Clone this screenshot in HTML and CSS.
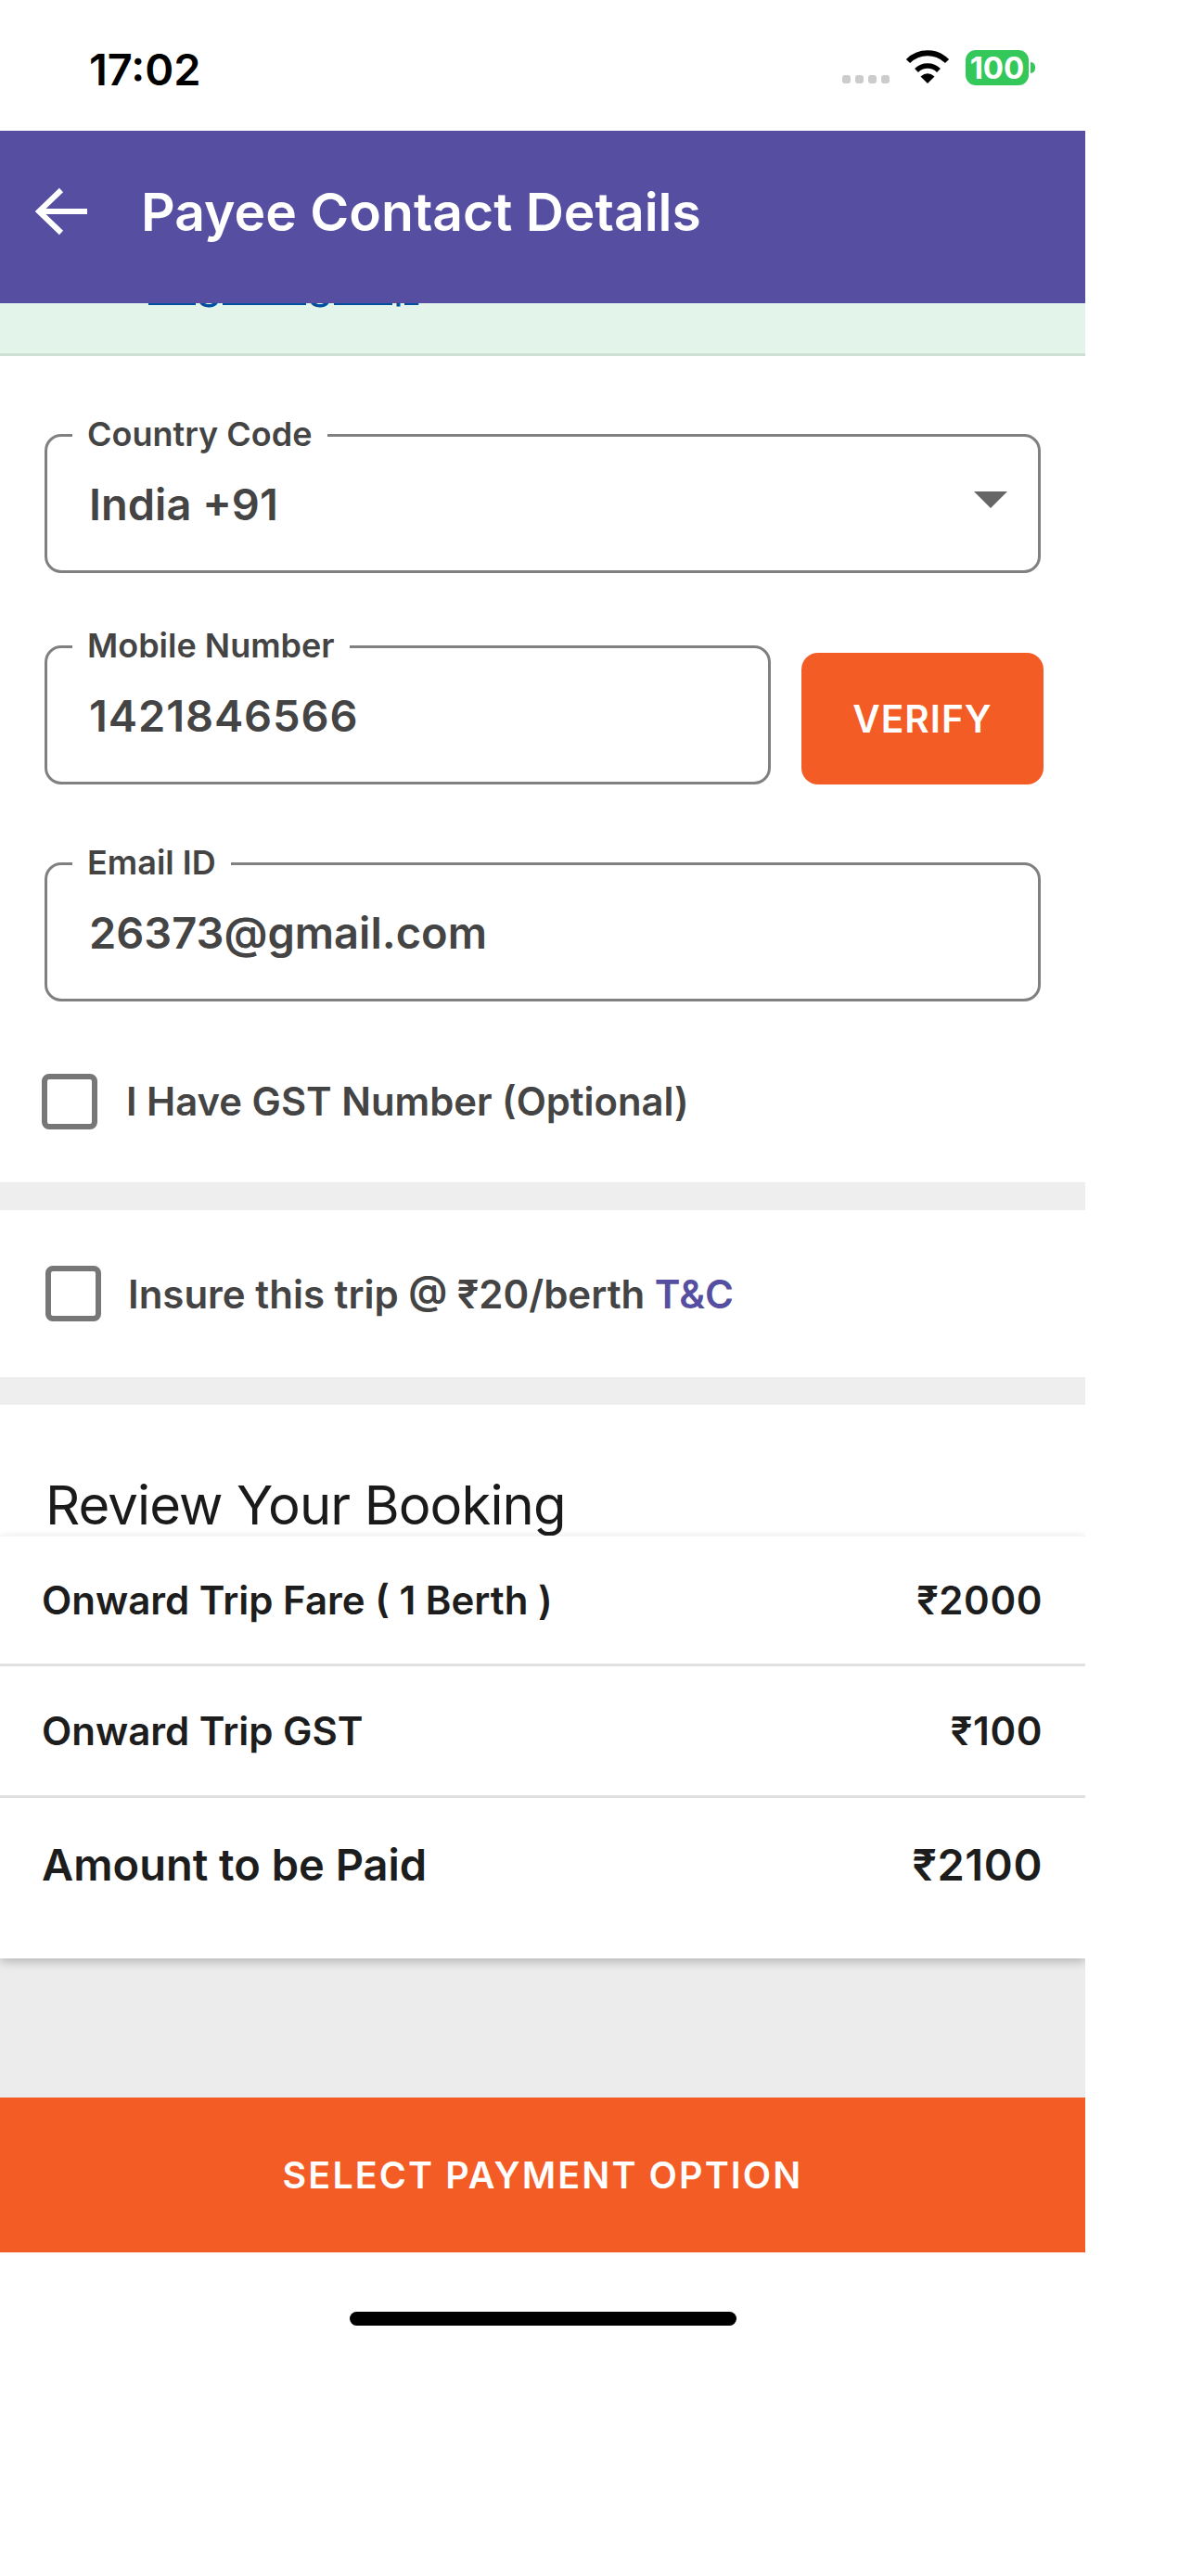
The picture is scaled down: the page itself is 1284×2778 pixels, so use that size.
FILE: index.html
```html
<!DOCTYPE html>
<html lang='en'>
<head>
    <meta charset='UTF-8'>
    <meta name='viewport' content='width=device-width, initial-scale=1.0'>
    <title>Payee Contact Details</title>
    <link rel="stylesheet" href="styles.css">
</head>
<body>
    <div class='app'>
        <div class='status-bar'>
            <span class='time'>17:02</span>
            <div class='status-icons'>
                <div class='signal'><i></i><i></i><i></i><i></i></div>
                <svg class='wifi' width='48' height='36' viewBox='0 0 48 36'>
                    <path d='M3 12A29.7 29.7 0 0 1 45 12' fill='none' stroke='#000' stroke-width='6'/>
                    <path d='M12 22A17 17 0 0 1 36 22' fill='none' stroke='#000' stroke-width='5.5'/>
                    <path d='M24 36L16.5 28.5Q24 22 31.5 28.5Z' fill='#000'/>
                </svg>
                <div class='battery'><span class='battery-level'>100</span><span class='battery-cap'></span></div>
            </div>
        </div>

        <header class='top-bar'>
            <svg class='back' width='56' height='52' viewBox='0 0 56 52'>
                <path d='M56 26H4M28 3L4 26L28 49' fill='none' stroke='#fff' stroke-width='6'/>
            </svg>
            <h1 class='title'>Payee Contact Details</h1>
        </header>

        <div class='banner'>
            <a class='banner-link'>Login/Sign up</a>
        </div>

        <section class='contact-form'>
            <fieldset class='field'>
                <legend>Country Code</legend>
                <span class='value'>India +91</span>
                <svg class='caret' width='36' height='18' viewBox='0 0 36 18'><path d='M0 0H36L18 18Z' fill='#666'/></svg>
            </fieldset>

            <div class='mobile-row'>
                <fieldset class='field field-mobile'>
                    <legend>Mobile Number</legend>
                    <span class='value'>1421846566</span>
                </fieldset>
                <button class='verify-btn'>VERIFY</button>
            </div>

            <fieldset class='field field-email'>
                <legend>Email ID</legend>
                <span class='value'>26373@gmail.com</span>
            </fieldset>

            <label class='check-row gst-row'>
                <span class='check-box'></span>
                <span>I Have GST Number (Optional)</span>
            </label>
        </section>

        <div class='band'></div>

        <label class='check-row insure-row'>
            <span class='check-box'></span>
            <span>Insure this trip @ ₹20/berth <a class='terms'>T&amp;C</a></span>
        </label>

        <div class='band'></div>

        <h2 class='review-title'>Review Your Booking</h2>

        <div class='fare-card'>
            <div class='fare-row'><span>Onward Trip Fare ( 1 Berth )</span><span class='amount'>₹2000</span></div>
            <div class='fare-row fare-row-gst'><span>Onward Trip GST</span><span class='amount'>₹100</span></div>
            <div class='fare-row fare-total'><span>Amount to be Paid</span><span class='amount'>₹2100</span></div>
        </div>

        <div class='filler'></div>

        <button class='pay-btn'>SELECT PAYMENT OPTION</button>

        <div class='home-area'><div class='home-bar'></div></div>
    </div>
</body>
</html>
```

FILE: styles.css
```css
* {
  box-sizing: border-box;
}

html,
body {
  margin: 0;
  background: #fff;
}

body {
  font-family: Inter, 'Noto Sans', sans-serif;
  color: #444;
}

.app {
  width: 1170px;
  height: 2778px;
  overflow: hidden;
}

/* status bar */
.status-bar {
  height: 141px;
  padding: 7px 54px 0 96px;
  display: flex;
  align-items: center;
  justify-content: space-between;
}

.time {
  font-size: 47px;
  font-weight: 600;
  color: #000;
}

.status-icons {
  display: flex;
  align-items: flex-end;
  gap: 17px;
  padding-bottom: 2px;
}

.signal {
  display: flex;
  gap: 5px;
  margin-bottom: 2px;
}

.signal i {
  width: 9px;
  height: 9px;
  border-radius: 3px;
  background: #ccc;
}

.wifi {
  display: block;
  margin-bottom: 2px;
}

.battery {
  display: flex;
  align-items: center;
  gap: 2px;
}

.battery-level {
  width: 68px;
  height: 38px;
  border-radius: 11px;
  background: #34c759;
  color: #fff;
  font-size: 33px;
  font-weight: 700;
  line-height: 38px;
  text-align: center;
}

.battery-cap {
  width: 5px;
  height: 12px;
  border-radius: 0 6px 6px 0;
  background: #34c759;
}

/* top bar */
.top-bar {
  height: 186px;
  padding: 0 0 12px 38px;
  display: flex;
  align-items: center;
  background: #564fa1;
}

.back {
  flex: none;
}

.title {
  margin: 0 0 0 58px;
  font-size: 57px;
  font-weight: 600;
  color: #fff;
}

/* strip scrolled under the top bar */
.banner {
  height: 57px;
  padding: 0 0 48px 160px;
  display: flex;
  align-items: flex-end;
  overflow: hidden;
  background: #e3f5ea;
  border-bottom: 3px solid #cde0d3;
}

.banner-link {
  font-size: 44.5px;
  color: #0050a0;
  text-decoration: underline;
}

/* form */
.contact-form {
  padding: 64px 45px 57px 45px;
}

.field {
  margin: 0 0 0 3px;
  padding: 0 33px 20px 45px;
  width: 1074px;
  height: 170px;
  display: flex;
  align-items: center;
  justify-content: space-between;
  border: 3px solid #808080;
  border-radius: 18px;
}

.field legend {
  margin-left: -18px;
  padding: 0 16px 3px;
  font-size: 36px;
  font-weight: 600;
  line-height: 40px;
  color: #444;
}

.value {
  font-size: 47px;
  font-weight: 600;
  color: #444;
}

.caret {
  margin-bottom: 8px;
}

.mobile-row {
  margin-top: 58px;
  display: flex;
  align-items: flex-end;
  gap: 33px;
}

.field-mobile {
  width: 783px;
  flex: none;
}

.field-mobile .value {
  letter-spacing: 0.9px;
}

.verify-btn {
  width: 261px;
  height: 142px;
  padding: 0;
  border: none;
  border-radius: 18px;
  background: #f45c25;
  color: #fff;
  font-family: inherit;
  font-size: 40.5px;
  font-weight: 600;
  letter-spacing: 1px;
}

.field-email {
  margin-top: 64px;
}

/* checkboxes */
.check-row {
  display: flex;
  align-items: center;
  font-size: 41.8px;
  font-weight: 600;
  color: #444;
}

.check-box {
  flex: none;
  width: 60px;
  height: 60px;
  border: 6px solid #777;
  border-radius: 8px;
}

.gst-row {
  margin-top: 78px;
  gap: 31px;
}

.insure-row {
  height: 180px;
  padding-left: 49px;
  gap: 29px;
  font-size: 42px;
}

.terms {
  color: #564fa1;
}

.band {
  height: 30px;
  background: #eee;
}

/* booking review */
.review-title {
  height: 141px;
  margin: 0;
  padding: 0 0 0 49px;
  display: flex;
  align-items: flex-end;
  font-size: 58px;
  font-weight: 400;
  letter-spacing: -0.9px;
  line-height: 65px;
  color: #1a1a1a;
}

.fare-card {
  position: relative;
  background: #fff;
  border-top: 1px solid #f5f5f5;
  box-shadow: 0 4px 10px rgba(0, 0, 0, 0.22);
}

.fare-row {
  height: 137px;
  padding: 0 46px 0 45px;
  display: flex;
  align-items: center;
  justify-content: space-between;
  font-size: 42px;
  font-weight: 600;
  color: #1d1d1d;
}

.amount {
  letter-spacing: 0.6px;
}

.fare-row-gst {
  height: 142px;
  border-top: 3px solid #e0e0e0;
}

.fare-total {
  height: 176px;
  padding-bottom: 31px;
  border-top: 3px solid #e0e0e0;
  font-size: 47px;
}

.filler {
  height: 150px;
  background: #ececec;
}

.pay-btn {
  display: block;
  width: 100%;
  height: 167px;
  padding: 0;
  border: none;
  background: #f45c25;
  color: #fff;
  font-family: inherit;
  font-size: 39.5px;
  font-weight: 600;
  letter-spacing: 2.1px;
}

.home-area {
  padding-top: 64px;
}

.home-bar {
  width: 417px;
  height: 15px;
  margin: 0 auto;
  border-radius: 8px;
  background: #000;
}
```
